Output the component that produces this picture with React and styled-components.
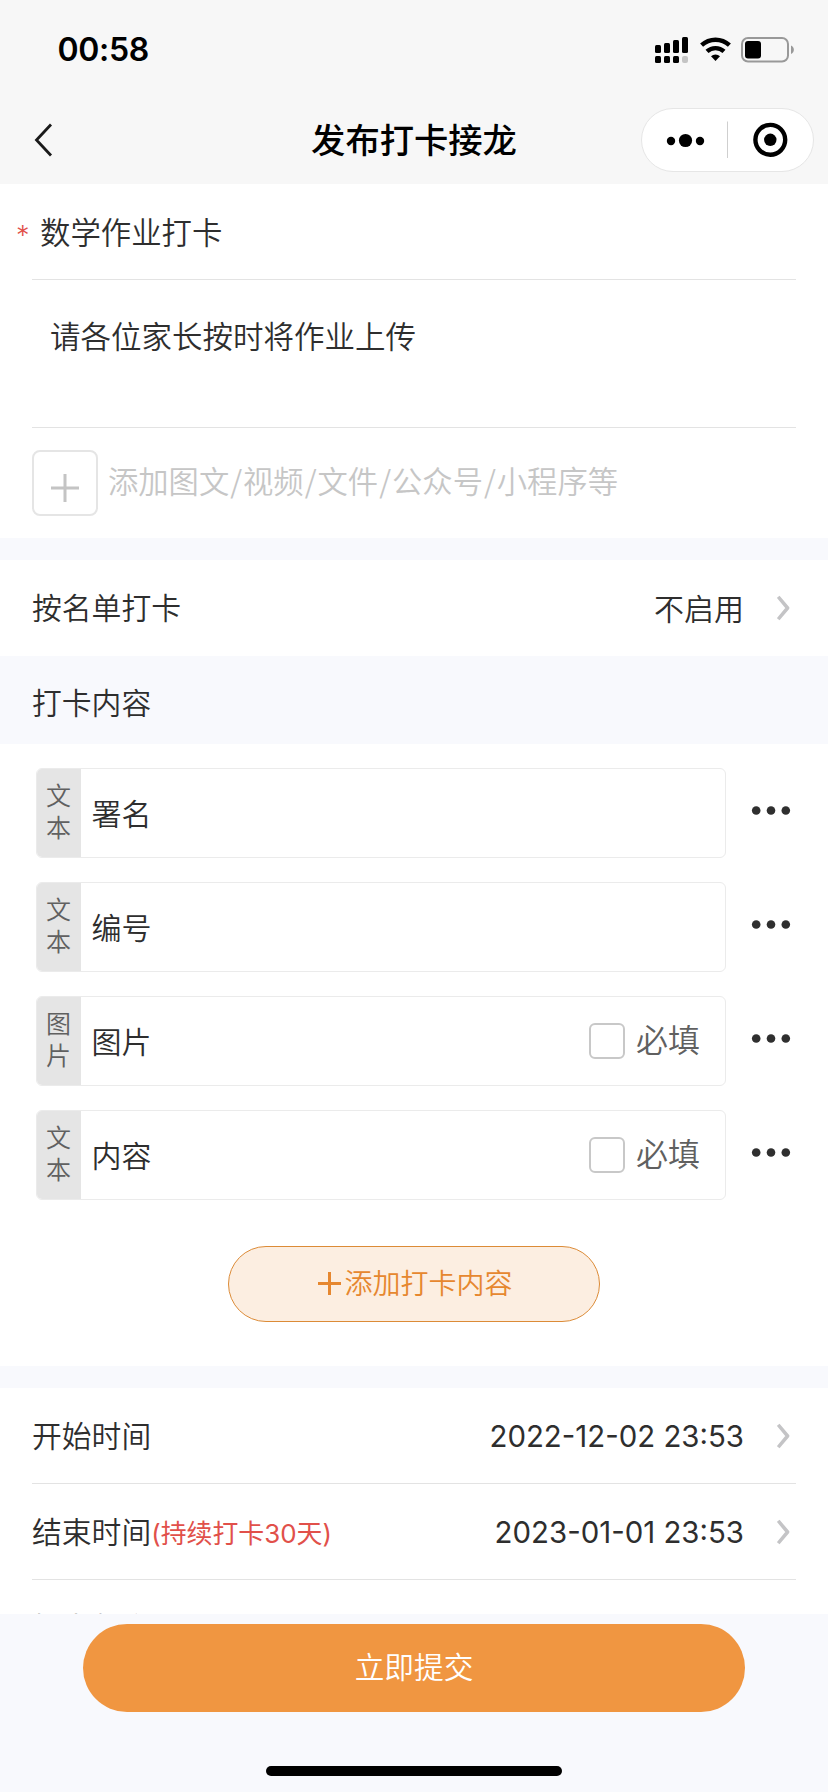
import React from 'react'
import styled, { createGlobalStyle } from 'styled-components'

const GlobalStyle = createGlobalStyle`
    * {
        box-sizing: border-box;
    }

    body {
        margin: 0;
        background: #f8f9fd;
        color: #2e2e2e;
        font-family: "Noto Sans CJK SC", sans-serif;
        font-weight: 350;
    }

    button {
        font-family: inherit;
        font-weight: inherit;
        padding: 0;
    }

    svg {
        display: block;
        flex: none;
    }
`

const Page = styled.div`
    display: flex;
    flex-direction: column;
    width: 828px;
    height: 1792px;
    overflow: hidden;
`

const Header = styled.header`
    flex: none;
    height: 184px;
    background: #f7f7f7;
`

const StatusBar = styled.div`
    display: flex;
    justify-content: space-between;
    align-items: center;
    height: 99px;
    padding: 0 34px 0 57.5px;
`

const Clock = styled.span`
    padding-top: 1px;
    font-family: Inter, sans-serif;
    font-size: 32px;
    font-weight: 600;
    line-height: 40px;
    letter-spacing: -0.3px;
    color: #000;
`

const NavBar = styled.div`
    display: grid;
    grid-template-columns: 187px 1fr 187px;
    align-items: center;
    height: 82px;
    padding-right: 14px;
    padding-left: 14px;
`

const BackButton = styled.button`
    display: flex;
    width: 60px;
    padding-left: 19px;
    border: 0;
    background: none;
`

const Title = styled.h1`
    margin: -4px 0 0;
    font-size: 34.3px;
    font-weight: 500;
    line-height: 50px;
    text-align: center;
    color: #000;
`

const Capsule = styled.div`
    display: flex;
    justify-self: end;
    width: 173px;
    height: 64px;
    border: 1px solid #e6e6e6;
    border-radius: 32px;
    background: #fff;
`

const Content = styled.main`
    flex: 1;
    min-height: 0;
    overflow: hidden;
`

const Section = styled.section`
    height: ${props => props.$height}px;
    margin-bottom: 22px;
    padding: 0 32px;
    background: #fff;
`

const TitleField = styled.div`
    display: flex;
    align-items: center;
    height: 95px;
    margin-left: -16px;
    padding-bottom: 2px;
    font-size: 30.4px;
`

const Required = styled.span`
    width: 24px;
    padding-top: 10px;
    font-family: Inter, sans-serif;
    font-size: 27px;
    color: #e1504a;
`

const Description = styled.div`
    height: 149px;
    padding: 33px 18px;
    border-top: 1px solid #e3e3e3;
    border-bottom: 1px solid #e3e3e3;
    font-size: 30.5px;
    line-height: 44px;
`

const Attachment = styled.div`
    display: flex;
    gap: 10px;
    padding-top: 22px;
`

const AddBox = styled.button`
    display: flex;
    justify-content: center;
    padding-top: 22px;
    width: 66px;
    height: 66px;
    border: 2px solid #e5e5e5;
    border-radius: 8px;
    background: #fff;
`

const Placeholder = styled.span`
    font-size: 30.3px;
    line-height: 60px;
    color: #c6c6c6;
`

const Slash = styled.span`
    padding: 0 1px;
`

const Row = styled.div`
    display: flex;
    align-items: center;
    height: 96px;
    padding-right: 6px;
    border-bottom: ${props => (props.$line ? '1px solid #e3e3e3' : '0')};
`

const Label = styled.span`
    margin-top: -4px;
    font-size: 29.8px;
    line-height: 44px;
`

const Value = styled.span`
    margin-top: ${props => (props.$numeric ? 2 : -3)}px;
    margin-right: 33px;
    margin-left: auto;
    font-family: ${props => (props.$numeric ? 'Inter, ' : '')}"Noto Sans CJK SC", sans-serif;
    font-size: ${props => (props.$numeric ? 29.4 : 30)}px;
    font-weight: ${props => (props.$numeric ? 400 : 350)};
    line-height: 44px;
`

const Hint = styled.span`
    margin-top: -1px;
    font-family: Inter, "Noto Sans CJK SC", sans-serif;
    font-size: 25.9px;
    font-weight: 380;
    color: #e1504a;
`

const GroupTitle = styled.h2`
    height: 88px;
    margin: -22px 0 0;
    padding: 1px 32px 0;
    font-size: 29.8px;
    font-weight: inherit;
    line-height: 88px;
`

const ItemList = styled.div`
    display: flex;
    flex-direction: column;
    gap: 24px;
    padding: 24px 5px 46px 4px;
`

const Item = styled.div`
    display: flex;
    align-items: center;
    justify-content: space-between;
    height: 90px;
`

const ItemBox = styled.div`
    display: flex;
    align-items: center;
    width: 690px;
    height: 90px;
    border: 1px solid #ebebeb;
    border-radius: 6px;
    overflow: hidden;
    font-size: 30px;
`

const Tag = styled.span`
    width: 44px;
    height: 90px;
    padding: 10px 9px;
    background: #e5e5e5;
    font-size: 25px;
    line-height: 32px;
    color: #606060;
`

const ItemName = styled.span`
    margin-top: -3px;
    margin-left: 10.5px;
    line-height: 44px;
`

const Check = styled.label`
    display: flex;
    align-items: center;
    gap: 11px;
    margin-right: 25px;
    margin-left: auto;
    font-size: 32px;
    line-height: 44px;
    color: #606060;
`

const CheckBox = styled.span`
    width: 36px;
    height: 36px;
    border: 2px solid #c8c8c8;
    border-radius: 6px;
    background: #fff;
`

const CheckText = styled.span`
    margin-top: -7px;
`

const AddButton = styled.button`
    display: flex;
    align-items: center;
    justify-content: center;
    gap: 3px;
    width: 372px;
    height: 76px;
    margin: 0 auto;
    padding: 0 0 2px 3px;
    border: 1px solid #dc8b37;
    border-radius: 38px;
    background: #fceee1;
    font-size: 28px;
    color: #e6872f;
`

const AddLabel = styled.span`
    line-height: 40px;
    margin-top: -3px;
`

const Footer = styled.footer`
    display: flex;
    flex: none;
    flex-direction: column;
    align-items: center;
    justify-content: space-between;
    height: 178px;
    padding: 10px 0 16px;
    background: #f8f9fd;
`

const Submit = styled.button`
    width: 662px;
    height: 88px;
    padding-bottom: 4px;
    border: 0;
    border-radius: 44px;
    background: #f09641;
    font-size: 29.7px;
    line-height: 84px;
    color: #fff;
`

const HomeIndicator = styled.div`
    width: 296px;
    height: 10px;
    border-radius: 5px;
    background: #000;
`

const StatusIcons = () => (
    <svg width="139" height="26" viewBox="0 0 139 26">
        {/* dual sim signal */}
        <rect x="0" y="8" width="6" height="8" rx="1.5" />
        <rect x="9" y="6" width="6" height="10" rx="1.5" />
        <rect x="18" y="3" width="6" height="13" rx="1.5" />
        <rect x="27" y="0" width="6" height="16" rx="1.5" />
        <rect x="0" y="19" width="6" height="7" rx="1.5" />
        <rect x="9" y="19" width="6" height="7" rx="1.5" />
        <rect x="18" y="19" width="6" height="7" rx="1.5" />
        <rect x="27" y="19" width="6" height="7" rx="2" fill="#c4c4c4" />
        {/* wifi */}
        <g fill="none" stroke="#000" strokeWidth="4.4">
            <path d="M46.6 8.2 A20.5 20.5 0 0 1 74.4 8.2" />
            <path d="M52 14.4 A12.6 12.6 0 0 1 69 14.4" />
        </g>
        <path d="M60.5 24 L56 19.3 A6.8 6.8 0 0 1 65 19.3 Z" />
        {/* battery */}
        <rect x="87" y="1" width="46" height="23.5" rx="6" fill="none" stroke="#999" strokeWidth="2" />
        <rect x="90" y="4" width="16" height="17.5" rx="3" />
        <path d="M136 8.5 C139.8 10 139.8 15.5 136 17 Z" fill="#999" />
    </svg>
)

const BackIcon = () => (
    <svg width="20" height="34" viewBox="0 0 20 34">
        <path d="M18 1.5 L3.5 17 L18 32.5" fill="none" stroke="#1a1a1a" strokeWidth="2.8" />
    </svg>
)

const CapsuleIcons = () => (
    <svg width="171" height="62" viewBox="0 0 171 62">
        <circle cx="29" cy="32" r="4.2" />
        <circle cx="43.5" cy="31.5" r="6.6" />
        <circle cx="58" cy="32" r="4.2" />
        <path d="M85.5 12.5 V49" stroke="#cfcfcf" strokeWidth="1" />
        <circle cx="128.3" cy="30.8" r="14.9" fill="none" stroke="#000" strokeWidth="4.4" />
        <circle cx="128.3" cy="30.8" r="6.2" />
    </svg>
)

const Plus = ({ size, color, weight }) => (
    <svg width={size} height={size} viewBox={`0 0 ${size} ${size}`}>
        <path
            d={`M0 ${size / 2} H${size} M${size / 2} 0 V${size}`}
            stroke={color}
            strokeWidth={weight}
        />
    </svg>
)

const Arrow = () => (
    <svg width="13" height="26" viewBox="0 0 13 26">
        <path d="M1.2 1.8 L10.6 13 L1.2 24.2" fill="none" stroke="#c4c4c6" strokeWidth="3.5" strokeLinejoin="round" />
    </svg>
)

const More = () => (
    <svg width="40" height="10" viewBox="0 0 40 10">
        <g fill="#2f2f2f">
            <circle cx="5.2" cy="4.5" r="4.3" />
            <circle cx="20" cy="4.5" r="4.3" />
            <circle cx="34.8" cy="4.5" r="4.3" />
        </g>
    </svg>
)

const MoreButton = styled.button`
    display: flex;
    margin-top: -4px;
    border: 0;
    background: none;
`

const attachmentTypes = ['添加图文', '视频', '文件', '公众号', '小程序等']

const items = [
    { id: 1, type: '文本', name: '署名' },
    { id: 2, type: '文本', name: '编号' },
    { id: 3, type: '图片', name: '图片', optional: true },
    { id: 4, type: '文本', name: '内容', optional: true },
]

const App = () => (
    <>
        <GlobalStyle />
        <Page>
            <Header>
                <StatusBar>
                    <Clock>00:58</Clock>
                    <StatusIcons />
                </StatusBar>
                <NavBar>
                    <BackButton aria-label="返回"><BackIcon /></BackButton>
                    <Title>发布打卡接龙</Title>
                    <Capsule><CapsuleIcons /></Capsule>
                </NavBar>
            </Header>

            <Content>
                <Section $height={354}>
                    <TitleField>
                        <Required>*</Required>
                        <span>数学作业打卡</span>
                    </TitleField>
                    <Description>请各位家长按时将作业上传</Description>
                    <Attachment>
                        <AddBox aria-label="添加"><Plus size={28} color="#c4c4c4" weight={3} /></AddBox>
                        <Placeholder>
                            {attachmentTypes.map((type, index) => (
                                <React.Fragment key={type}>
                                    {index > 0 && <Slash>/</Slash>}
                                    {type}
                                </React.Fragment>
                            ))}
                        </Placeholder>
                    </Attachment>
                </Section>

                <Section $height={96}>
                    <Row>
                        <Label>按名单打卡</Label>
                        <Value>不启用</Value>
                        <Arrow />
                    </Row>
                </Section>

                <GroupTitle>打卡内容</GroupTitle>
                <Section $height={622}>
                    <ItemList>
                        {items.map(item => (
                            <Item key={item.id}>
                                <ItemBox>
                                    <Tag>{item.type}</Tag>
                                    <ItemName>{item.name}</ItemName>
                                    {item.optional && (
                                        <Check>
                                            <CheckBox />
                                            <CheckText>必填</CheckText>
                                        </Check>
                                    )}
                                </ItemBox>
                                <MoreButton aria-label="更多"><More /></MoreButton>
                            </Item>
                        ))}
                    </ItemList>
                    <AddButton>
                        <Plus size={23} color="#e6872f" weight={3} />
                        <AddLabel>添加打卡内容</AddLabel>
                    </AddButton>
                </Section>

                <Section $height={300}>
                    <Row $line>
                        <Label>开始时间</Label>
                        <Value $numeric>2022-12-02 23:53</Value>
                        <Arrow />
                    </Row>
                    <Row $line>
                        <Label>结束时间</Label>
                        <Hint>(持续打卡30天)</Hint>
                        <Value $numeric>2023-01-01 23:53</Value>
                        <Arrow />
                    </Row>
                    <Row>
                        <Label>打卡频率</Label>
                    </Row>
                </Section>
            </Content>

            <Footer>
                <Submit>立即提交</Submit>
                <HomeIndicator />
            </Footer>
        </Page>
    </>
)

export default App
